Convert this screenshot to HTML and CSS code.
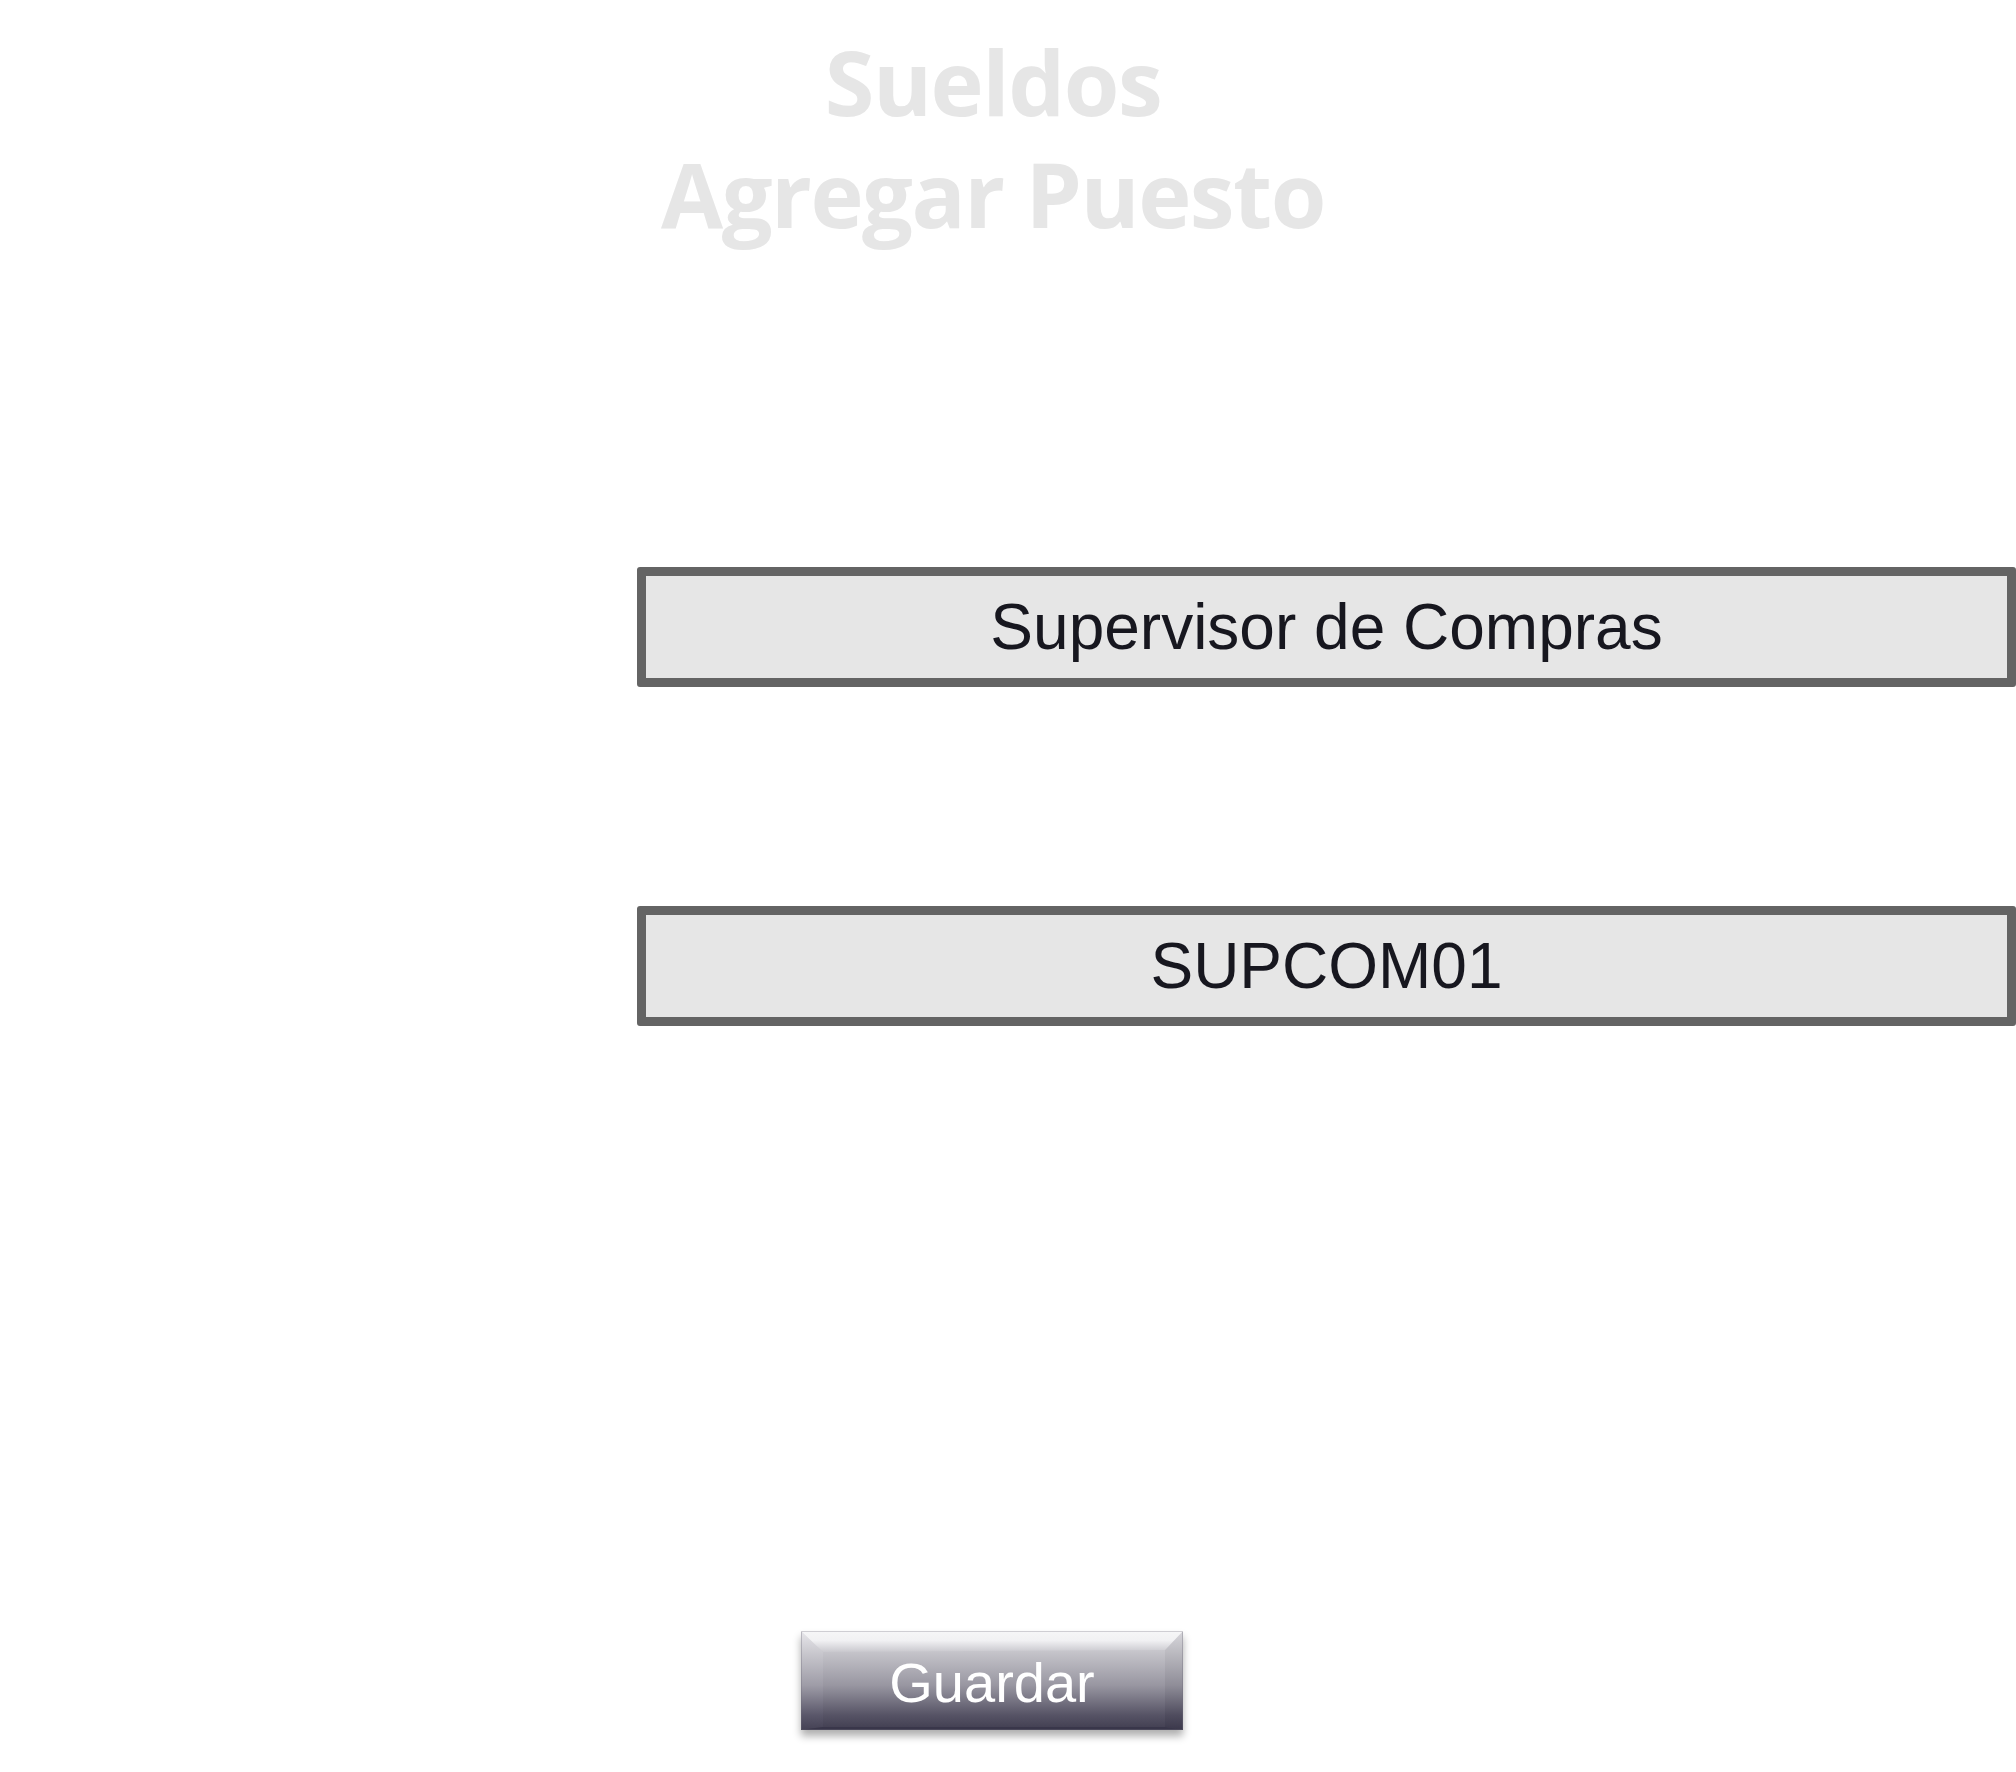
FILE: index.html
```html
<!DOCTYPE html>
<html lang="es">
<head>
<meta charset="utf-8">
<title>Sueldos - Agregar Puesto</title>
<link rel="stylesheet" href="styles.css">
</head>
<body>
<main class="page">
  <header class="title">
    <h1 class="title-line">Sueldos</h1>
    <h2 class="title-line">Agregar Puesto</h2>
  </header>
  <section class="form">
    <div class="field field-first">Supervisor de Compras</div>
    <div class="field field-second">SUPCOM01</div>
  </section>
  <div class="actions">
    <button class="btn" type="button">
      <svg class="btn-bevel" viewBox="0 0 382 99" preserveAspectRatio="none" aria-hidden="true">
        <defs>
          <linearGradient id="gBody" x1="0" y1="0" x2="0" y2="1">
            <stop offset="0" stop-color="#e4e3e7"/>
            <stop offset="0.22" stop-color="#c4c3c9"/>
            <stop offset="0.55" stop-color="#9896a1"/>
            <stop offset="0.85" stop-color="#565365"/>
            <stop offset="1" stop-color="#403d50"/>
          </linearGradient>
          <linearGradient id="gTop" x1="0" y1="0" x2="0" y2="1">
            <stop offset="0" stop-color="#f6f6f7"/>
            <stop offset="0.45" stop-color="#f1f1f3"/>
            <stop offset="1" stop-color="#c9c8ce"/>
          </linearGradient>
          <linearGradient id="gLeft" x1="0" y1="0" x2="0" y2="1">
            <stop offset="0" stop-color="#e8e7eb"/>
            <stop offset="0.22" stop-color="#c9c8ce"/>
            <stop offset="0.55" stop-color="#9e9ca7"/>
            <stop offset="0.85" stop-color="#5a576a"/>
            <stop offset="1" stop-color="#444154"/>
          </linearGradient>
          <linearGradient id="gRight" x1="0" y1="0" x2="0" y2="1">
            <stop offset="0" stop-color="#d8d7dc"/>
            <stop offset="0.22" stop-color="#bbbac0"/>
            <stop offset="0.55" stop-color="#8f8d98"/>
            <stop offset="0.85" stop-color="#4f4c5e"/>
            <stop offset="1" stop-color="#3b384b"/>
          </linearGradient>
        </defs>
        <rect x="0" y="0" width="382" height="99" fill="url(#gBody)"/>
        <polygon points="0,0 22,21 22,96 0,99" fill="url(#gLeft)"/>
        <polygon points="382,0 364,19 364,96 382,99" fill="url(#gRight)"/>
        <polygon points="0,0 382,0 364,19 22,21" fill="url(#gTop)"/>
        <polygon points="0,99 22,96 364,96 382,99" fill="#39364a"/>
        <rect x="0.5" y="0.5" width="381" height="98" fill="none" stroke="#6c6a78" stroke-opacity="0.35" stroke-width="1"/>
        <line x1="0" y1="0.5" x2="382" y2="0.5" stroke="#cfced3" stroke-width="1"/>
      </svg>
      <span class="btn-label">Guardar</span>
    </button>
  </div>
</main>
</body>
</html>
```

FILE: styles.css
```css
html, body {
  margin: 0;
  padding: 0;
  background: #ffffff;
}

.page {
  width: 2016px;
  min-height: 1772px;
  display: flex;
  flex-direction: column;
  font-family: "Liberation Sans", Arial, sans-serif;
}

.title {
  padding-top: 25px;
  padding-right: 30px;
  display: flex;
  flex-direction: column;
  align-items: center;
}

.title-line {
  margin: 0;
  font-family: "Open Sans", "Noto Sans", sans-serif;
  font-weight: 700;
  font-size: 90px;
  line-height: 112px;
  letter-spacing: -1.5px;
  color: #e6e6e6;
  white-space: nowrap;
}

.form {
  display: flex;
  flex-direction: column;
  gap: 219px;
  margin-top: 318px;
}

.field {
  margin-left: 637px;
  height: 120px;
  box-sizing: border-box;
  border: 9px solid #646464;
  border-radius: 3px;
  background: #e6e6e6;
  display: flex;
  align-items: center;
  justify-content: center;
  font-family: "Liberation Sans", Arial, sans-serif;
  font-size: 64px;
  color: #17171f;
  white-space: nowrap;
}

.actions {
  margin-top: 605px;
  padding-left: 801px;
  display: flex;
}

.btn {
  position: relative;
  width: 382px;
  height: 99px;
  padding: 0;
  border: 0;
  background: #8e8c97;
  box-shadow: 0 6px 8px rgba(0, 0, 0, 0.32);
  display: flex;
  align-items: center;
  justify-content: center;
  cursor: pointer;
}

.btn-bevel {
  position: absolute;
  left: 0;
  top: 0;
  width: 100%;
  height: 100%;
  display: block;
}

.btn-label {
  position: relative;
  font-family: "Liberation Sans", Arial, sans-serif;
  font-size: 56px;
  color: #ffffff;
  margin-top: 3px;
}
```
